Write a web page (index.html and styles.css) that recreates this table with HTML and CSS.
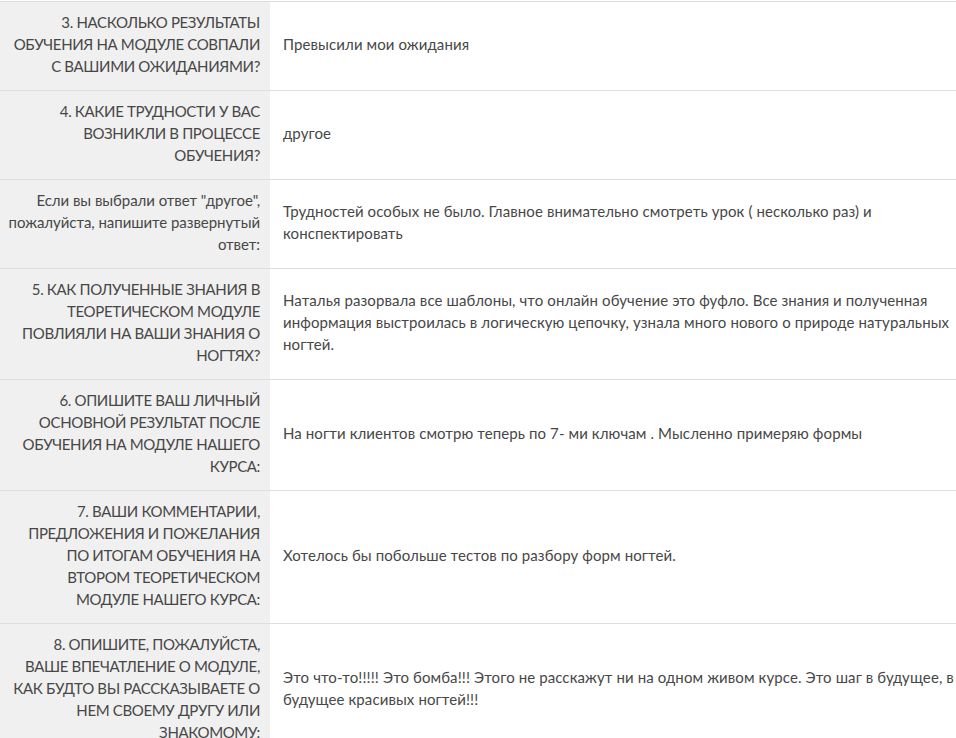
FILE: index.html
```html
<!DOCTYPE html>
<html lang="ru">
<head>
    <meta charset="UTF-8">
    <meta name="viewport" content="width=device-width, initial-scale=1.0">
    <title>Ответы анкеты</title>
    <link rel="stylesheet" href="styles.css">
</head>
<body>
    <table class="answers">
        <tr>
            <th>3. НАСКОЛЬКО РЕЗУЛЬТАТЫ ОБУЧЕНИЯ НА МОДУЛЕ СОВПАЛИ С ВАШИМИ ОЖИДАНИЯМИ?</th>
            <td>Превысили мои ожидания</td>
        </tr>
        <tr>
            <th>4. КАКИЕ ТРУДНОСТИ У ВАС ВОЗНИКЛИ В ПРОЦЕССЕ ОБУЧЕНИЯ?</th>
            <td>другое</td>
        </tr>
        <tr>
            <th class="note">Если вы выбрали ответ "другое", пожалуйста, напишите развернутый ответ:</th>
            <td>Трудностей особых не было. Главное внимательно смотреть урок ( несколько раз) и конспектировать</td>
        </tr>
        <tr>
            <th>5. КАК ПОЛУЧЕННЫЕ ЗНАНИЯ В ТЕОРЕТИЧЕСКОМ МОДУЛЕ ПОВЛИЯЛИ НА ВАШИ ЗНАНИЯ О НОГТЯХ?</th>
            <td>Наталья разорвала все шаблоны, что онлайн обучение это фуфло. Все знания и полученная информация выстроилась в логическую цепочку, узнала много нового о природе натуральных ногтей.</td>
        </tr>
        <tr>
            <th>6. ОПИШИТЕ ВАШ ЛИЧНЫЙ ОСНОВНОЙ РЕЗУЛЬТАТ ПОСЛЕ ОБУЧЕНИЯ НА МОДУЛЕ НАШЕГО КУРСА:</th>
            <td>На ногти клиентов смотрю теперь по 7- ми ключам . Мысленно примеряю формы</td>
        </tr>
        <tr>
            <th>7. ВАШИ КОММЕНТАРИИ, ПРЕДЛОЖЕНИЯ И ПОЖЕЛАНИЯ ПО ИТОГАМ ОБУЧЕНИЯ НА ВТОРОМ ТЕОРЕТИЧЕСКОМ МОДУЛЕ НАШЕГО КУРСА:</th>
            <td>Хотелось бы побольше тестов по разбору форм ногтей.</td>
        </tr>
        <tr>
            <th>8. ОПИШИТЕ, ПОЖАЛУЙСТА, ВАШЕ ВПЕЧАТЛЕНИЕ О МОДУЛЕ, КАК БУДТО ВЫ РАССКАЗЫВАЕТЕ О НЕМ СВОЕМУ ДРУГУ ИЛИ ЗНАКОМОМУ:</th>
            <td>Это что-то!!!!! Это бомба!!! Этого не расскажут ни на одном живом курсе. Это шаг в будущее, в будущее красивых ногтей!!!</td>
        </tr>
    </table>
</body>
</html>
```

FILE: styles.css
```css
/* General Styling */
body {
    margin: 0;
    padding: 1px 0 0;
    font-family: 'Lato', sans-serif;
    font-size: 15px;
    line-height: 22px;
    color: #474747;
    background: #ffffff;
}

.answers {
    width: 100%;
    border-collapse: collapse;
    border-top: 1px solid #dddddd;
}

.answers tr {
    border-bottom: 1px solid #dddddd;
}

.answers th {
    width: 252px;
    padding: 9px 10px 13px 8px;
    background: #f0f0f0;
    font-weight: normal;
    letter-spacing: -0.35px;
    text-align: right;
    vertical-align: middle;
}

.answers th.note {
    letter-spacing: -0.05px;
}

.answers td {
    padding: 9px 0 13px 13px;
    letter-spacing: 0.1px;
    text-align: left;
    vertical-align: middle;
}
```
